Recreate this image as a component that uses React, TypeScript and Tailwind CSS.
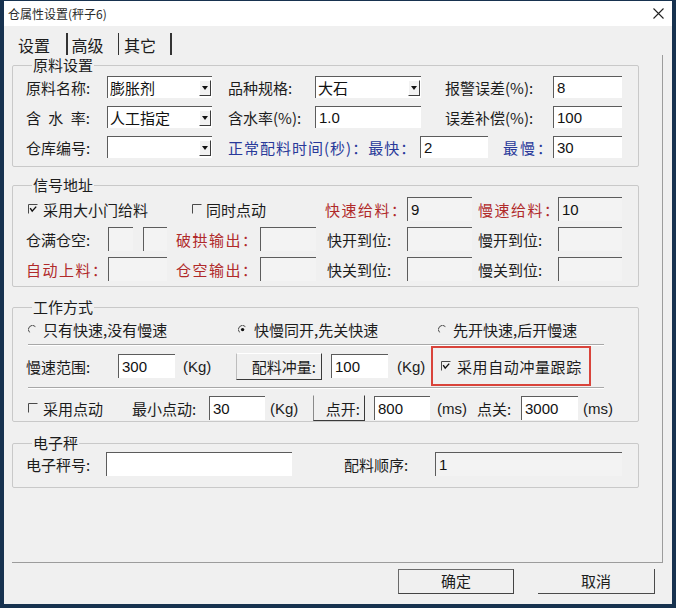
import React from "react";

const txt = "font-['Noto_Sans_CJK_SC','Noto_Sans',sans-serif]";
const num = "font-['Liberation_Sans','Noto_Sans_CJK_SC',sans-serif]";

type TBox = { w: string; v?: string; white?: boolean; tall?: boolean };

const Box: React.FC<TBox> = ({ w, v = "", white = false, tall = false }) => (
  <div
    className={`${w} ${tall ? "h-[24px]" : "h-[22px]"} ${white ? "bg-white" : "bg-[#f3f3f3]"} shrink-0 border-t border-l border-[#5c5c5c] flex items-center pl-[3px] text-[15px] leading-none text-[#111] ${num}`}
  >
    {v}
  </div>
);

const Combo: React.FC<{ w: string; v?: string }> = ({ w, v = "" }) => (
  <div className={`${w} h-[22px] shrink-0 bg-white border-t border-l border-[#5c5c5c] flex items-center justify-between pl-[2px] pr-[1px]`}>
    <span className="text-[15px] leading-none text-[#111]">{v}</span>
    <span className="w-[12px] h-[16px] border-r border-b border-[#3c3c3c] border-t border-l border-t-white border-l-white bg-[#f2f2f2] flex items-center justify-center">
      <svg width="6" height="4" viewBox="0 0 6 4">
        <path d="M0 0H6L3 4Z" fill="#111" />
      </svg>
    </span>
  </div>
);

const Check: React.FC<{ on?: boolean }> = ({ on }) => (
  <svg width="10" height="10" viewBox="0 0 10 10" className="shrink-0">
    <path d="M0.5 9.5V0.5H9.5" stroke="#4a4a4a" fill="none" />
    {on && <path d="M2.2 4.2L4.2 7.2L8.2 2.6" stroke="#111" strokeWidth="1.4" fill="none" />}
  </svg>
);

const Radio: React.FC<{ on?: boolean }> = ({ on }) => (
  <svg width="9" height="9" viewBox="0 0 9 9" className="shrink-0">
    <path d="M1.6 7.4A3.6 3.6 0 0 1 7.4 1.6" stroke="#4a4a4a" fill="none" />
    {on && <circle cx="4.6" cy="4.6" r="1.7" fill="#111" />}
  </svg>
);

const Sep = () => (
  <div className="ml-[2px] w-[576px] h-[2px] border-t border-[#a8a8a8] border-b border-b-white" />
);

const Group: React.FC<{ title: string; cls: string; children: React.ReactNode }> = ({ title, cls, children }) => (
  <fieldset className={`w-[627px] border border-[#c9c9c9] rounded-[2px] px-[13px] ${cls}`}>
    <legend className="ml-[6px] px-[1px] text-[15px] leading-[16px] text-[#1c1c1c]">{title}</legend>
    {children}
  </fieldset>
);

export default function App() {
  const red = "text-[#b02a2a] tracking-[1.5px]";
  const blue = "text-[#28399a]";

  return (
    <div className={`w-[676px] h-[608px] bg-[#17324f] pt-[1px] pl-[4px] ${txt} text-[#1c1c1c]`}>
      <div className="w-[668px] h-[603px] bg-[#f0f0f0] flex flex-col">
        {/* title bar */}
        <div className="h-[25px] bg-white flex items-center justify-between pl-[4px] pr-[8px]">
          <span className="text-[12px] text-[#2a2a2a]">仓属性设置(秤子6)</span>
          <svg width="11" height="11" viewBox="0 0 11 11">
            <path d="M0.5 0.5L10.5 10.5M10.5 0.5L0.5 10.5" stroke="#222" strokeWidth="1.1" />
          </svg>
        </div>

        <div className="pl-[8px] flex flex-col">
          {/* tabs */}
          <div className="h-[29px] flex items-end text-[16px] leading-[19px]">
            <span className="ml-[6px] w-[48px]">设置</span>
            <span className="w-[1.5px] h-[22px] bg-[#333]" />
            <span className="ml-[4px] w-[46px]">高级</span>
            <span className="w-[1.5px] h-[22px] bg-[#333]" />
            <span className="ml-[5px] w-[46px]">其它</span>
            <span className="w-[1.5px] h-[22px] bg-[#333]" />
          </div>

          {/* panel */}
          <div className="w-[651px] h-[508px] border-r border-b border-[#9c9c9c] pt-[2px] flex flex-col text-[15px] leading-none whitespace-nowrap">
            <Group title="原料设置" cls="pb-[8px]">
              <div className="pt-[3px] flex flex-col gap-[8px]">
                <div className="h-[22px] flex items-center">
                  <span className="w-[81px] shrink-0">原料名称:</span>
                  <Combo w="w-[105px]" v="膨胀剂" />
                  <span className="ml-[16px] w-[87px] shrink-0">品种规格:</span>
                  <Combo w="w-[106px]" v="大石" />
                  <span className="ml-[24px] w-[108px] shrink-0">报警误差(%):</span>
                  <Box w="w-[69px]" v="8" white />
                </div>
                <div className="h-[22px] flex items-center">
                  <span className="w-[81px] shrink-0 [word-spacing:4px]">含 水 率:</span>
                  <Combo w="w-[105px]" v="人工指定" />
                  <span className="ml-[16px] w-[87px] shrink-0">含水率(%):</span>
                  <Box w="w-[106px]" v="1.0" white />
                  <span className="ml-[24px] w-[108px] shrink-0">误差补偿(%):</span>
                  <Box w="w-[69px]" v="100" white />
                </div>
                <div className="h-[22px] flex items-center">
                  <span className="w-[81px] shrink-0">仓库编号:</span>
                  <Combo w="w-[105px]" />
                  <span className={`ml-[16px] w-[192px] shrink-0 tracking-[1px] ${blue}`}>正常配料时间(秒)：最快：</span>
                  <Box w="w-[68px]" v="2" white />
                  <span className={`ml-[15px] w-[50px] shrink-0 tracking-[2px] ${blue}`}>最慢：</span>
                  <Box w="w-[69px]" v="30" white />
                </div>
              </div>
            </Group>

            <Group title="信号地址" cls="mt-[10px] pb-[5px]">
              <div className="pt-[4px] flex flex-col gap-[6px]">
                <div className="h-[24px] flex items-center">
                  <div className="w-[166px] shrink-0 flex items-center gap-[5px] pl-[2px]">
                    <Check on />
                    <span>采用大小门给料</span>
                  </div>
                  <div className="w-[133px] shrink-0 flex items-center gap-[4px]">
                    <Check />
                    <span>同时点动</span>
                  </div>
                  <span className={`w-[82px] shrink-0 ${red}`}>快速给料：</span>
                  <Box w="w-[65px]" v="9" tall />
                  <span className={`ml-[6px] w-[80px] shrink-0 ${red}`}>慢速给料：</span>
                  <Box w="w-[64px]" v="10" tall />
                </div>
                <div className="h-[24px] flex items-center">
                  <span className="w-[82px] shrink-0">仓满仓空:</span>
                  <Box w="w-[25px]" tall />
                  <span className="ml-[10px]" />
                  <Box w="w-[24px]" tall />
                  <span className={`ml-[9px] w-[84px] shrink-0 ${red}`}>破拱输出：</span>
                  <Box w="w-[56px]" tall />
                  <span className="ml-[11px] w-[80px] shrink-0">快开到位:</span>
                  <Box w="w-[65px]" tall />
                  <span className="ml-[6px] w-[80px] shrink-0">慢开到位:</span>
                  <Box w="w-[64px]" tall />
                </div>
                <div className="h-[24px] flex items-center">
                  <span className={`w-[82px] shrink-0 ${red}`}>自动上料：</span>
                  <Box w="w-[59px]" tall />
                  <span className={`ml-[9px] w-[84px] shrink-0 ${red}`}>仓空输出：</span>
                  <Box w="w-[56px]" tall />
                  <span className="ml-[11px] w-[80px] shrink-0">快关到位:</span>
                  <Box w="w-[65px]" tall />
                  <span className="ml-[6px] w-[80px] shrink-0">慢关到位:</span>
                  <Box w="w-[64px]" tall />
                </div>
              </div>
            </Group>

            <Group title="工作方式" cls="mt-[12px] pb-[1px]">
              <div className="pt-[3px] flex flex-col">
                <div className="h-[22px] flex items-center">
                  <div className="w-[210px] shrink-0 flex items-center gap-[6px] pl-[2px]">
                    <Radio />
                    <span>只有快速,没有慢速</span>
                  </div>
                  <div className="w-[200px] shrink-0 flex items-center gap-[7px] pl-[2px]">
                    <Radio on />
                    <span>快慢同开,先关快速</span>
                  </div>
                  <div className="flex items-center gap-[6px] pl-[2px]">
                    <Radio />
                    <span>先开快速,后开慢速</span>
                  </div>
                </div>
                <div className="mt-[4px]">
                  <Sep />
                </div>
                <div className="h-[40px] flex items-center">
                  <span className="w-[92px] shrink-0">慢速范围:</span>
                  <Box w="w-[57px]" v="300" white tall />
                  <span className={`ml-[8px] w-[53px] shrink-0 ${num}`}>(Kg)</span>
                  <div className="w-[86px] h-[27px] shrink-0 border border-t-white border-l-[#bdbdbd] border-r-[#3a3a3a] border-b-[#3a3a3a] flex items-center justify-end pr-[5px]">
                    配料冲量:
                  </div>
                  <span className="ml-[9px]" />
                  <Box w="w-[57px]" v="100" white tall />
                  <span className={`ml-[9px] w-[34px] shrink-0 ${num}`}>(Kg)</span>
                  <div className="w-[160px] h-[40px] shrink-0 border-2 border-[#d9443b] flex items-center gap-[6px] pl-[8px]">
                    <Check on />
                    <span className="tracking-[0.6px]">采用自动冲量跟踪</span>
                  </div>
                </div>
                <div className="mt-[1px]">
                  <Sep />
                </div>
                <div className="pt-[7px] h-[31px] flex items-center">
                  <div className="w-[106px] shrink-0 flex items-center gap-[5px] pl-[2px] self-end h-[24px]">
                    <Check />
                    <span>采用点动</span>
                  </div>
                  <span className="w-[77px] shrink-0">最小点动:</span>
                  <Box w="w-[56px]" v="30" white tall />
                  <span className={`ml-[5px] w-[43px] shrink-0 ${num}`}>(Kg)</span>
                  <div className="w-[52px] h-[26px] shrink-0 border border-t-transparent border-l-[#8a8a8a] border-r-[#3a3a3a] border-b-[#3a3a3a] flex items-center justify-end pr-[4px]">
                    点开:
                  </div>
                  <span className="ml-[9px]" />
                  <Box w="w-[56px]" v="800" white tall />
                  <span className={`ml-[7px] w-[40px] shrink-0 ${num}`}>(ms)</span>
                  <span className="w-[44px] shrink-0">点关:</span>
                  <Box w="w-[57px]" v="3000" white tall />
                  <span className={`ml-[5px] shrink-0 ${num}`}>(ms)</span>
                </div>
              </div>
            </Group>

            <Group title="电子秤" cls="mt-[13px] pb-[11px]">
              <div className="pt-[1px] h-[25px] flex items-center">
                <span className="w-[80px] shrink-0">电子秤号:</span>
                <Box w="w-[186px]" white tall />
                <span className="ml-[52px] w-[91px] shrink-0">配料顺序:</span>
                <Box w="w-[187px]" v="1" tall />
              </div>
            </Group>
          </div>

          {/* buttons */}
          <div className="mt-[6px] h-[25px] flex justify-end gap-[24px] pr-[17px] text-[15px]">
            <div className="w-[116px] h-[25px] border border-[#6a6a6a] border-b-[#444] border-r-[#444] flex items-center justify-center">
              确定
            </div>
            <div className="w-[117px] h-[25px] border-r border-b border-[#4a4a4a] flex items-center justify-center">
              取消
            </div>
          </div>
        </div>
      </div>
    </div>
  );
}
